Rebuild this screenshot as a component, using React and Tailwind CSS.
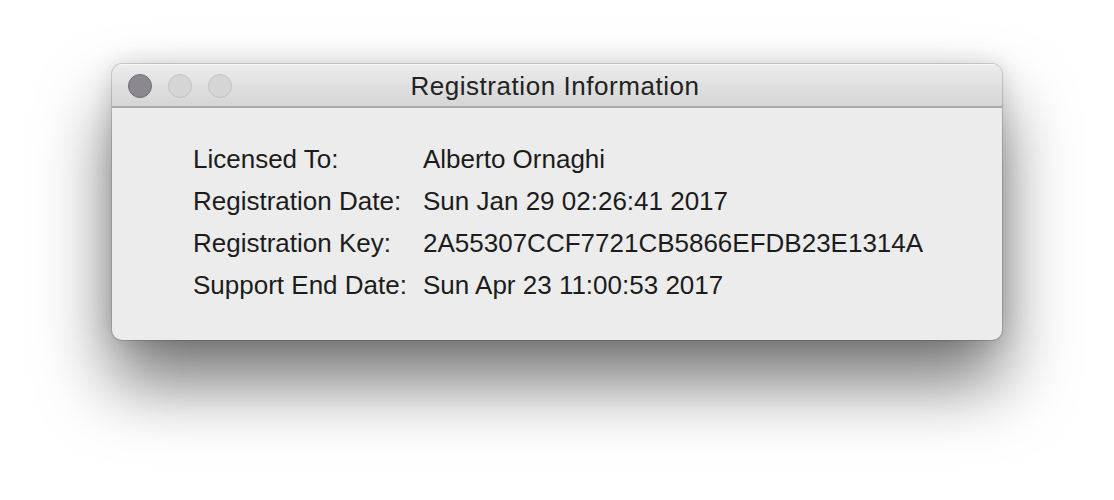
export default function App() {
  const rows = [
    ['Licensed To:', 'Alberto Ornaghi'],
    ['Registration Date:', 'Sun Jan 29 02:26:41 2017'],
    ['Registration Key:', '2A55307CCF7721CB5866EFDB23E1314A'],
    ['Support End Date:', 'Sun Apr 23 11:00:53 2017'],
  ]

  return (
    <div className="w-[1114px] h-[500px] bg-white pt-[64px] overflow-hidden font-['Liberation_Sans',Arial,sans-serif]">
      <div className="mx-auto w-[890px] h-[276px] rounded-[10px] bg-[#ececec] overflow-hidden shadow-[0_42px_70px_rgba(0,0,0,0.55),0_0_24px_rgba(0,0,0,0.14),0_0_0_1px_rgba(0,0,0,0.14)]">
        {/* title bar */}
        <div className="grid grid-cols-[1fr_auto_1fr] items-center h-[44px] border-b-2 border-[#a9a9a9] bg-gradient-to-b from-[#ececec] to-[#d5d5d5] shadow-[inset_0_1px_0_#f7f7f7]">
          <div className="flex items-center gap-[16px] pl-[16px]">
            <span className="w-[24px] h-[24px] rounded-full bg-[#8b898d] border border-[#6e6d71]" />
            <span className="w-[24px] h-[24px] rounded-full bg-[#d5d5d5] border border-[#c3c3c3]" />
            <span className="w-[24px] h-[24px] rounded-full bg-[#d5d5d5] border border-[#c3c3c3]" />
          </div>
          <div className="pt-[1px] pr-[4px] text-[26px] leading-[42px] tracking-[0.55px] text-[#222]">
            Registration Information
          </div>
          <div />
        </div>

        {/* details */}
        <div className="pl-[81px] pt-[30px]">
          {rows.map(([label, value]) => (
            <div key={label} className="flex text-[26px] leading-[42px] text-[#1c1c1c]">
              <div className="w-[230px]">{label}</div>
              <div>{value}</div>
            </div>
          ))}
        </div>
      </div>
    </div>
  )
}
